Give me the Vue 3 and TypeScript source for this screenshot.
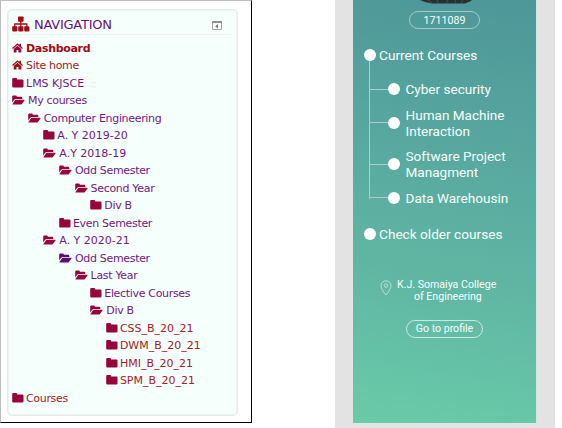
<script setup lang="ts">
type Icon = 'home' | 'closed' | 'open'
interface NavItem {
  label: string
  level: number
  icon: Icon
  tone?: string
}

const items: NavItem[] = [
  { label: 'Dashboard', level: 0, icon: 'home', tone: 'active' },
  { label: 'Site home', level: 0, icon: 'home', tone: 'red' },
  { label: 'LMS KJSCE', level: 0, icon: 'closed', tone: 'code' },
  { label: 'My courses', level: 0, icon: 'open' },
  { label: 'Computer Engineering', level: 1, icon: 'open' },
  { label: 'A. Y 2019-20', level: 2, icon: 'closed', tone: 'code' },
  { label: 'A.Y 2018-19', level: 2, icon: 'open', tone: 'code' },
  { label: 'Odd Semester', level: 3, icon: 'open' },
  { label: 'Second Year', level: 4, icon: 'open' },
  { label: 'Div B', level: 5, icon: 'closed' },
  { label: 'Even Semester', level: 3, icon: 'closed' },
  { label: 'A. Y 2020-21', level: 2, icon: 'open', tone: 'code' },
  { label: 'Odd Semester', level: 3, icon: 'open', tone: 'visited' },
  { label: 'Last Year', level: 4, icon: 'open' },
  { label: 'Elective Courses', level: 5, icon: 'closed' },
  { label: 'Div B', level: 5, icon: 'open' },
  { label: 'CSS_B_20_21', level: 6, icon: 'closed', tone: 'leaf code' },
  { label: 'DWM_B_20_21', level: 6, icon: 'closed', tone: 'leaf code' },
  { label: 'HMI_B_20_21', level: 6, icon: 'closed', tone: 'leaf code' },
  { label: 'SPM_B_20_21', level: 6, icon: 'closed', tone: 'leaf code' },
  { label: 'Courses', level: 0, icon: 'closed', tone: 'leaf' },
]

const courses: string[][] = [
  ['Cyber security'],
  ['Human Machine', 'Interaction'],
  ['Software Project', 'Managment'],
  ['Data Warehousin'],
]
</script>

<template>
  <main class="page">
    <section class="frame">
      <nav class="card">
        <header class="head">
          <svg class="sitemap" viewBox="0 0 18 16">
            <rect x="6" y="0.500" width="5.600" height="5.200" rx=".8" />
            <rect x="0.200" y="10.200" width="5.200" height="5.200" rx=".8" />
            <rect x="6.200" y="10.200" width="5.200" height="5.200" rx=".8" />
            <rect x="12.200" y="10.200" width="5.200" height="5.200" rx=".8" />
            <path d="M8.800 5v6M2.800 11V8h12v3" fill="none" stroke="#a00b14" stroke-width="1.300" />
          </svg>
          <h1>NAVIGATION</h1>
          <svg class="dock" viewBox="0 0 10 9">
            <path d="M.5.5h9v8h-9z" fill="#fafdfc" stroke="#a2a5a4" />
            <path d="M0 0h10v2H0z" fill="#8c8f8e" />
            <path d="M6 3v4.500L3.200 5.300z" fill="#777" />
          </svg>
        </header>
        <ul class="tree">
          <li v-for="(item, i) in items" :key="i" :class="[item.icon, item.tone]" :style="{ paddingLeft: item.level * 15.65 + 'px' }">
            <svg v-if="item.icon === 'home'" class="icon" viewBox="0 0 11 10">
              <path d="M5.500.3 7.400 1.900V.8H9v2.500l1.900 1.700-.8.900L5.500 2 .9 5.900.1 5z" />
              <path d="M5.500 2.700 9.300 5.900v3.700H6.500V6.900h-2v2.700H1.700V5.900z" />
            </svg>
            <svg v-else-if="item.icon === 'closed'" class="icon" viewBox="0 0 12 10">
              <path d="M.2 1.200q0-1.100 1.100-1.100h2.800q1 0 1 1v.4h5.300q1.100 0 1.100 1.100v5.900q0 1.100-1.100 1.100H1.300Q.2 9.600.2 8.500z" />
            </svg>
            <svg v-else class="icon" viewBox="0 0 13 10">
              <path d="M.2 7.600V1.500Q.2.4 1.300.4h2.500q1 0 1 1v.4h4.400q1.100 0 1.100 1.100v1.200H4q-1.200 0-2 .9z" />
              <path d="M2.800 5.400q.5-.6 1.300-.6h8q.8 0 .4.600L9.900 9q-.5.600-1.300.600H.9q-.9 0-.4-.6z" />
            </svg>
            <span>{{ item.label }}</span>
          </li>
        </ul>
      </nav>
    </section>

    <section class="stage">
      <div class="phone">
        <div class="avatar">
          <svg viewBox="0 0 52 4">
            <path d="M0 0h52l-2 1.500-5 2H12Q5 2.800 0 0z" fill="#273133" />
            <path d="M8 0l4 3M17 0l1 3M28 0l-2 3M35 0l1 3M43 0l-2 3" stroke="#4d585a" stroke-width=".8" />
          </svg>
        </div>
        <div class="pill id">1711089</div>
        <div class="group current"><i class="dot"></i><span>Current Courses</span></div>
        <ul class="courses">
          <li v-for="course in courses" :key="course[0]">
            <i class="branch"></i><i class="dot"></i>
            <div><p v-for="line in course" :key="line">{{ line }}</p></div>
          </li>
        </ul>
        <div class="group older"><i class="dot"></i><span>Check older courses</span></div>
        <div class="college">
          <svg class="pin" viewBox="0 0 12 16">
            <path d="M6 15Q1 9 1 5.800a5 5 0 0 1 10 0Q11 9 6 15z" />
            <circle cx="6" cy="5.600" r="1.700" />
          </svg>
          <div><p>K.J. Somaiya College</p><p class="second">of Engineering</p></div>
        </div>
        <button class="pill profile">Go to profile</button>
      </div>
    </section>
  </main>
</template>

<style>
body { margin: 0; background: #fff; }
</style>

<style scoped>
* { box-sizing: border-box; }
ul, p, h1 { margin: 0; padding: 0; list-style: none; }
svg { display: block; flex: none; }
.page { display: flex; width: 562px; height: 428px; overflow: hidden; background: #fff; }
.frame {
  width: 252px; height: 423px; padding: 8px 0 0 6px;
  border: 1px solid #bdbdbd; border-right: 1px solid #000; border-bottom: 1px solid #000;
  font-family: "DejaVu Sans", Verdana, sans-serif;
}
.card {
  width: 231px; height: 407px; padding: 5px 4px 0;
  border: 1px solid #e3ebe8; border-radius: 5px; background: #f5fffc;
  box-shadow: inset 0 0 0 1px #edf5f2;
}
.head { display: flex; align-items: center; height: 20px; border-bottom: 1px solid #ebf2f0; }
.sitemap { width: 18px; height: 16px; margin-bottom: 2px; fill: #a00b14; }
h1 { margin-left: 4px; font-size: 13px; line-height: 20px; font-weight: 400; color: #6a0f78; letter-spacing: -.25px; }
.dock { width: 10px; height: 9px; margin: 2px 11px 0 auto; }
.tree { padding-top: 4.500px; }
.tree li { display: flex; align-items: center; height: 17.500px; color: #74187f; font-size: 11px; line-height: 17.500px; letter-spacing: -.32px; white-space: nowrap; }
.tree .code { letter-spacing: 0; }
.icon { height: 10px; margin-bottom: 1px; fill: #96053c; }
.home .icon { width: 11px; margin-right: 3px; }
.closed .icon { width: 12px; margin-right: 2px; }
.open .icon { width: 13px; margin-right: 3px; }
.tree .active { color: #a00b14; font-weight: 700; }
.tree .red, .tree .leaf { color: #a5201c; }
.red .icon { fill: #a00b14; }
.visited .icon { fill: #5d0b6c; }

.stage { width: 220px; height: 428px; margin-left: 83px; padding-left: 18px; background: #e3e3e3; }
.phone {
  display: flex; flex-direction: column; width: 184px; height: 423.500px;
  border-right: 1px solid #cfe8e4; border-bottom: 1px solid #d4eee3;
  background: linear-gradient(190deg, #4e9699 0%, #56a59e 30%, #60b6a3 65%, #6acba8 100%);
  color: #f6fffc; font-family: Roboto, sans-serif;
}
.avatar { width: 52px; height: 4px; margin-left: 67px; }
.avatar svg { width: 52px; height: 4px; }
.pill { display: flex; align-items: center; justify-content: center; flex: none; padding: 0; border-radius: 10px; background: none; color: inherit; font-family: inherit; }
.id { width: 71px; height: 18px; margin: 7px 0 0 56px; border: 1px solid #a4cbc9; font-size: 10.700px; }
.dot { flex: none; width: 12px; height: 12px; border-radius: 50%; background: #fff; }
.group { display: flex; align-items: center; flex: none; height: 16px; margin-left: 10.500px; font-size: 13.650px; white-space: nowrap; }
.group span { margin-left: 3.500px; }
.current { margin-top: 17.500px; }
.courses { display: flex; flex-direction: column; gap: 9.500px; width: 160px; height: 138px; flex: none; margin: -1.500px 0 0 16px; padding-top: 20px; border-left: 1px solid #a9d1cc; }
.courses li { display: flex; align-items: center; flex: none; font-size: 13.550px; line-height: 16px; white-space: nowrap; }
.branch { width: 18px; height: 1px; background: #a9d1cc; }
.courses .dot { margin-right: 5.500px; }
.older { margin-top: 26.500px; }
.college { display: flex; flex: none; align-items: center; height: 24px; margin: 37.500px 0 0 27px; font-size: 10.600px; line-height: 12px; white-space: nowrap; }
.pin { width: 12px; height: 16px; margin: 0 5px 6px 0; fill: none; stroke: #bfe5db; stroke-width: .9; }
.second { padding-left: 17px; }
.profile { width: 77px; height: 18px; margin: 16.500px 0 0 53px; border: 1px solid #c8eade; font-size: 10.600px; }
</style>
